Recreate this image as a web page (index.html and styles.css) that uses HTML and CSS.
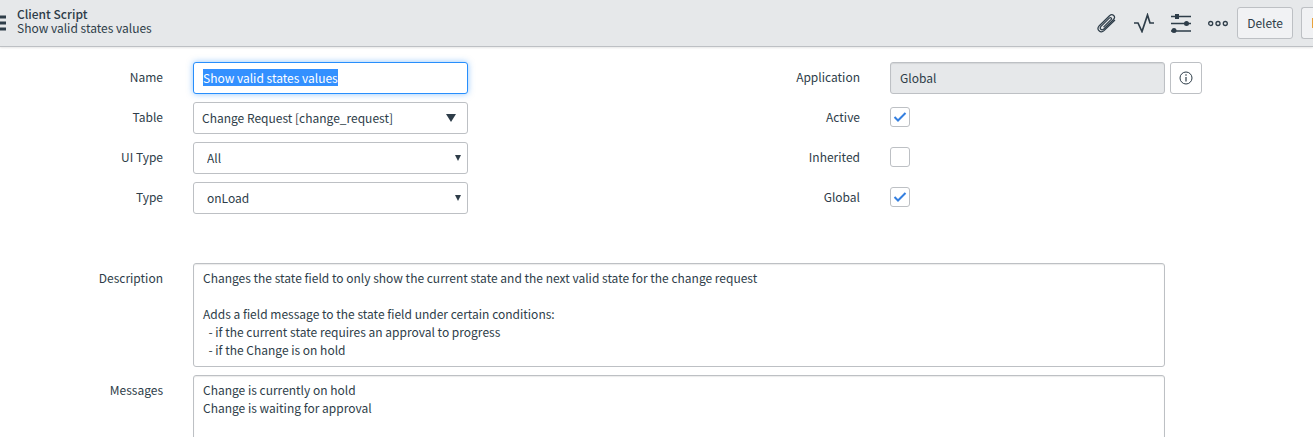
FILE: index.html
```html
<!DOCTYPE html>
<html lang="en">
<head>
    <meta charset="UTF-8">
    <meta name="viewport" content="width=device-width, initial-scale=1.0">
    <title>Client Script</title>
    <link rel="stylesheet" href="styles.css">
</head>
<body>
    <header class="form-header">
        <button type="button" class="icon-btn menu-btn" aria-label="Menu">
            <svg width="6" height="16" viewBox="0 0 6 16"><path d="M0 2h6M0 8h6M0 14h6" stroke-width="3"/></svg>
        </button>
        <h1 class="title">
            <span class="title-type">Client Script</span>
            <span class="title-name">Show valid states values</span>
        </h1>
        <div class="actions">
            <button type="button" class="icon-btn" aria-label="Attachments">
                <svg width="20" height="20" viewBox="0 0 20 20"><path d="M6.500 14.200L14 6.700c1.300-1.400-.3-2.900-1.700-1.600L4 13.300c-2 2.300.6 4.700 2.800 2.700L16.500 6.500c2.800-3-1-6.500-4-3.800L2.300 12.700c-3.500 3.800 1.200 8.200 5 4.700L18 7" stroke-width="1.200"/></svg>
            </button>
            <button type="button" class="icon-btn" aria-label="Activity">
                <svg width="20" height="20" viewBox="0 0 20 20"><path d="M0 10h4l4 8.500L13.500 2l2.500 8h4" stroke-width="1.700"/></svg>
            </button>
            <button type="button" class="icon-btn" aria-label="Personalize form">
                <svg width="20" height="20" viewBox="0 0 20 20"><path d="M0 3.500h20M0 10.500h20M0 18h20" stroke-width="1.600"/><path class="solid" d="M4 1h4v5H4z"/><circle class="solid" cx="15.500" cy="10.500" r="2.500"/><circle class="solid" cx="3" cy="17.500" r="2.500"/></svg>
            </button>
            <button type="button" class="icon-btn" aria-label="More options">
                <svg width="20" height="20" viewBox="0 0 20 20"><circle cx="2.700" cy="10.500" r="2" stroke-width="1.300"/><circle cx="10" cy="10.500" r="2" stroke-width="1.300"/><circle cx="17.300" cy="10.500" r="2" stroke-width="1.300"/></svg>
            </button>
            <button type="button" class="btn">Delete</button>
            <button type="button" class="btn btn-edge" aria-label="More"><svg width="1" height="10" viewBox="0 0 1 10"><path class="accent" d="M0 0h1v10H0z"/></svg></button>
        </div>
    </header>

    <form class="record-form">
        <div class="columns">
            <div class="column">
                <div class="form-group">
                    <label for="name">Name</label>
                    <input type="text" id="name" class="form-control" value="Show valid states values" spellcheck="false" autocomplete="off">
                </div>
                <div class="form-group">
                    <label for="table">Table</label>
                    <select id="table" class="form-control table-select">
                        <option>Change Request [change_request]</option>
                    </select>
                </div>
                <div class="form-group">
                    <label for="ui-type">UI Type</label>
                    <select id="ui-type" class="form-control">
                        <option>All</option>
                    </select>
                </div>
                <div class="form-group">
                    <label for="type">Type</label>
                    <select id="type" class="form-control">
                        <option>onLoad</option>
                    </select>
                </div>
            </div>
            <div class="column">
                <div class="form-group">
                    <label for="application">Application</label>
                    <input type="text" id="application" class="form-control" value="Global" readonly>
                    <button type="button" class="info-btn" aria-label="Application details">
                        <svg width="14" height="14" viewBox="0 0 14 14"><circle cx="7" cy="7" r="6" stroke-width="1"/><path d="M7 6v4.500" stroke-width="1.200"/><circle class="solid" cx="7" cy="4" r=".8"/></svg>
                    </button>
                </div>
                <div class="form-group">
                    <label for="active">Active</label>
                    <input type="checkbox" id="active" checked>
                </div>
                <div class="form-group">
                    <label for="inherited">Inherited</label>
                    <input type="checkbox" id="inherited">
                </div>
                <div class="form-group">
                    <label for="global">Global</label>
                    <input type="checkbox" id="global" checked>
                </div>
            </div>
        </div>

        <div class="form-group">
            <label for="description">Description</label>
            <textarea id="description" class="form-control" rows="5" spellcheck="false">Changes the state field to only show the current state and the next valid state for the change request

Adds a field message to the state field under certain conditions:
  - if the current state requires an approval to progress
  - if the Change is on hold</textarea>
        </div>
        <div class="form-group">
            <label for="messages">Messages</label>
            <textarea id="messages" class="form-control" rows="5" spellcheck="false">Change is currently on hold
Change is waiting for approval</textarea>
        </div>
    </form>

    <script>
        const nameField = document.getElementById('name');
        nameField.focus({ preventScroll: true });
        nameField.select();
    </script>
</body>
</html>
```

FILE: styles.css
```css
* {
    box-sizing: border-box;
}
html {
    height: 100%;
    overflow: hidden;
}
body {
    height: 100%;
    margin: 0;
    overflow: hidden;
    background-color: #fff;
    color: #2e3d49;
    font-family: "Noto Sans CJK SC", "Noto Sans", sans-serif;
    font-size: 12px;
    line-height: 18px;
}
button,
input,
select,
textarea {
    font: inherit;
    color: inherit;
}
svg {
    display: block;
    fill: none;
    stroke: #2e3d49;
}
.solid {
    fill: #2e3d49;
    stroke: none;
}
.accent {
    fill: #e8a33d;
    stroke: none;
}

/* header bar */
.form-header {
    display: flex;
    align-items: center;
    height: 47px;
    background-color: #e6e8ea;
    border-bottom: 1px solid #bdc0c4;
    box-shadow: 0 1px 2px rgba(0, 0, 0, 0.1);
}
.icon-btn {
    padding: 0;
    border: none;
    background: none;
    cursor: pointer;
}
.menu-btn {
    margin-right: 11px;
}
.title {
    margin: 0;
    padding-bottom: 4px;
    font-size: 12px;
    font-weight: 400;
    line-height: 14px;
}
.title span {
    display: block;
}
.title .title-type {
    font-weight: 500;
}
.actions {
    display: flex;
    align-items: center;
    gap: 17px;
    margin-left: auto;
}
.btn {
    height: 32px;
    margin-left: -8px;
    padding: 0 9px;
    border: 1px solid #bdc0c4;
    border-radius: 3px;
    background-color: #f1f2f4;
    cursor: pointer;
}
.btn-edge {
    margin-left: -9px;
    padding: 0 0 0 10px;
    border-right: none;
    border-radius: 3px 0 0 3px;
}

/* form */
.record-form {
    padding: 15px 111px 0 0;
}
.columns {
    display: grid;
    grid-template-columns: 1fr 1fr;
    column-gap: 192px;
    margin-bottom: 41px;
}
.form-group {
    display: grid;
    grid-template-columns: 188px 1fr 32px;
    column-gap: 5px;
    align-items: start;
    min-height: 32px;
    margin-bottom: 8px;
}
label {
    padding: 6px 25px 0 0;
    text-align: right;
}
.form-control {
    width: 100%;
    height: 32px;
    margin: 0;
    padding: 0 9px;
    border: 1px solid #bdc0c4;
    border-radius: 3px;
    background-color: #fff;
    box-shadow: inset 0 1px 1px rgba(0, 0, 0, 0.08);
}
input.form-control {
    padding-bottom: 2px;
}
.form-control:focus {
    outline: none;
    border-color: #278efc;
    box-shadow: 0 0 6px rgba(39, 142, 252, 0.5);
}
.form-control[readonly] {
    background-color: #e6e8ea;
}
.form-control::selection {
    background-color: #3390ff;
    color: #fff;
}
select.form-control {
    appearance: none;
    padding: 0 13px;
    background-image: url("data:image/svg+xml,%3Csvg xmlns='http://www.w3.org/2000/svg' width='6' height='6'%3E%3Cpath d='M0 0h6L3 6z' fill='%232e3d49'/%3E%3C/svg%3E");
    background-position: right 6px center;
    background-repeat: no-repeat;
    box-shadow: none;
}
select.table-select {
    padding: 0 8px;
    background-image: url("data:image/svg+xml,%3Csvg xmlns='http://www.w3.org/2000/svg' width='10' height='8'%3E%3Cpath d='M0 0h10L5 8z' fill='%232e3d49'/%3E%3C/svg%3E");
    background-position: right 11px center;
}
textarea.form-control {
    display: block;
    height: auto;
    padding: 5px 9px 7px;
    overflow: hidden;
    resize: none;
}
input[type="checkbox"] {
    appearance: none;
    width: 20px;
    height: 20px;
    margin: 5px 0 0;
    border: 1px solid #bdc0c4;
    border-radius: 3px;
    background: #fff center no-repeat;
}
input[type="checkbox"]:checked {
    background-image: url("data:image/svg+xml,%3Csvg xmlns='http://www.w3.org/2000/svg' width='14' height='10'%3E%3Cpath d='M1.500 5l3.500 3.500L12.500 1' fill='none' stroke='%23347fe0' stroke-width='2'/%3E%3C/svg%3E");
}
.info-btn {
    display: flex;
    align-items: center;
    justify-content: center;
    width: 32px;
    height: 32px;
    padding: 0;
    border: 1px solid #bdc0c4;
    border-radius: 3px;
    background-color: #fff;
    cursor: pointer;
}
```
